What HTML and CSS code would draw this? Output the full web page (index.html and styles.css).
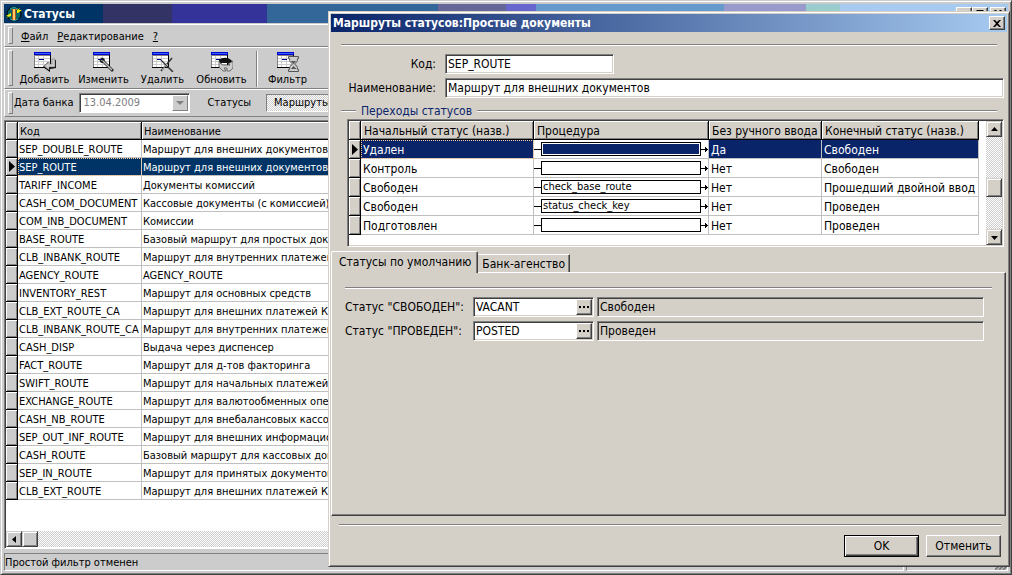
FILE: index.html
```html
<!DOCTYPE html>
<html lang="ru">
<head>
    <meta charset="UTF-8">
    <meta name="viewport" content="width=device-width, initial-scale=1.0">
    <title>Статусы</title>
    <link rel="stylesheet" href="styles.css">
</head>
<body>
    <svg class="defs" aria-hidden="true">
        <symbol id="sheet" viewBox="0 0 17 16">
            <path d="M0 0h17v16H0z" fill="#000"/>
            <path d="M0 0h16v15H0z" fill="#808080"/>
            <path d="M1 4h15v11H1z" fill="#fff"/>
            <path d="M0 0h17v3H0z" fill="#00c"/>
            <path d="M1 1h15v1H1z" fill="#36f"/>
            <path d="M1 6.5h15M1 9.5h15M1 12.5h15M4.5 4v11M9.5 4v11" stroke="#ccc" fill="none"/>
            <path d="M5 7h5v1H5z" fill="#008"/>
        </symbol>
    </svg>

    <div class="window">
        <div class="caption">
            <svg class="app-icon" viewBox="0 0 16 16">
                <circle cx="8" cy="8" r="7" fill="#066" stroke="#000"/>
                <path d="M4 3l4-2 4 2M4 13l4 2 4-2" stroke="#3aa" fill="none"/>
                <path d="M5 3h6v1H5zM6 4h4v10H6z" fill="#a52"/>
                <path d="M7 3h2v11H7z" fill="#fc6"/>
                <path d="M0 12l2-2H0l5-3v3l-3 1zM11 7V4l3-2-1 2h3l-4 3z" fill="#ee0"/>
            </svg>
            <h1>Статусы</h1>
            <div class="caption-buttons">
                <button class="cap-btn" aria-label="Свернуть"></button>
                <button class="cap-btn" aria-label="Развернуть"><svg viewBox="0 0 9 9"><path d="M0 0h9v9H0zM1 2v6h7V2z" fill-rule="evenodd"/></svg></button>
                <button class="cap-btn cap-close" aria-label="Закрыть"><svg viewBox="0 0 8 7"><path d="M0 0h2l2 2 2-2h2L5 3.5 8 7H6L4 5 2 7H0l3-3.5z"/></svg></button>
            </div>
        </div>

        <div class="bar menu-bar">
            <button class="menu"><u>Ф</u>айл</button>
            <button class="menu"><u>Р</u>едактирование</button>
            <button class="menu"><u>?</u></button>
        </div>

        <div class="bar tool-bar">
            <button class="tool">
                <svg viewBox="0 0 22 20">
                    <use href="#sheet" width="17" height="16"/>
                    <path d="M22 8v8l-6 1v3l-7-5 5-5v3h4V8z" fill="#000"/>
                    <path d="M21 7v8h-6v3l-5-4 5-4v2h3V7z" fill="#ccc" stroke="#777" stroke-width=".6"/>
                </svg>
                Добавить
            </button>
            <button class="tool">
                <svg viewBox="0 0 22 20">
                    <use href="#sheet" width="17" height="16"/>
                    <path d="M7 6c3-1 5 0 5 3l9 9-2 2-9-9c-3 0-4-2-3-4l2 2 1-1z" fill="#222"/>
                    <path d="M10 9l9 9" stroke="#bbb" stroke-width="1.5"/>
                </svg>
                Изменить
            </button>
            <button class="tool">
                <svg viewBox="0 0 22 20">
                    <use href="#sheet" width="17" height="16"/>
                    <path d="M9 8l12 12M20 6L9 19" stroke="#333" stroke-width="1.5"/>
                    <path d="M9 7l7 7M15 12l-5 6" stroke="#aaa"/>
                </svg>
                Удалить
            </button>
            <button class="tool">
                <svg viewBox="0 0 22 20">
                    <use href="#sheet" width="17" height="16"/>
                    <path d="M8 8c3-3 9-3 12 0l2 2-3 3-2-2H11l-3 2z" fill="#111"/>
                    <path d="M8 9v6l4 4h3l-2-3h3v3h3l3-3V9l-5 3 2 1h-7l-2-1z" fill="#ccc" stroke="#444" stroke-width=".7"/>
                </svg>
                Обновить
            </button>
            <span class="separator"></span>
            <button class="tool">
                <svg viewBox="0 0 22 20">
                    <use href="#sheet" width="17" height="16"/>
                    <path d="M11.5 4.500h10v2h-1c0 3-1 4-3 5.500 2 1.500 3 2.500 3 5.500h1v2h-10v-2h1c0-3 1-4 3-5.500-2-1.500-3-2.500-3-5.500h-1z" fill="#ccc" stroke="#555"/>
                    <path d="M14 9h5l-2.500 3zM14 17l2.500-3 3 3z" fill="#555"/>
                </svg>
                Фильтр
            </button>
        </div>

        <div class="bar filter-bar">
            <label for="bankDate">Дата банка</label>
            <div class="date-box">
                <select id="bankDate" disabled>
                    <option>13.04.2009</option>
                </select>
                <span class="drop"><svg viewBox="0 0 8 4"><path d="M0 0h8L4 4z" fill="#808080"/></svg></span>
            </div>
            <span class="filter-title">Статусы</span>
            <button class="pressed">Маршруты</button>
        </div>

        <div class="grid-box">
            <table class="grid routes">
                <thead>
                    <tr><th class="mark"></th><th class="code">Код</th><th>Наименование</th></tr>
                </thead>
                <tbody>
                    <tr><td class="mark"></td><td>SEP_DOUBLE_ROUTE</td><td>Маршрут для внешних документов (</td></tr>
                    <tr class="selected"><td class="mark"><svg class="pointer" viewBox="0 0 6 11"><path d="M0 0l6 5.5L0 11z"/></svg></td><td class="focus">SEP_ROUTE</td><td>Маршрут для внешних документов</td></tr>
                    <tr><td class="mark"></td><td>TARIFF_INCOME</td><td>Документы комиссий</td></tr>
                    <tr><td class="mark"></td><td>CASH_COM_DOCUMENT</td><td>Кассовые документы (с комиссией)</td></tr>
                    <tr><td class="mark"></td><td>COM_INB_DOCUMENT</td><td>Комиссии</td></tr>
                    <tr><td class="mark"></td><td>BASE_ROUTE</td><td>Базовый маршрут для простых доку</td></tr>
                    <tr><td class="mark"></td><td>CLB_INBANK_ROUTE</td><td>Маршрут для внутренних платежей</td></tr>
                    <tr><td class="mark"></td><td>AGENCY_ROUTE</td><td>AGENCY_ROUTE</td></tr>
                    <tr><td class="mark"></td><td>INVENTORY_REST</td><td>Маршрут для основных средств</td></tr>
                    <tr><td class="mark"></td><td>CLB_EXT_ROUTE_CA</td><td>Маршрут для внешних платежей КБ</td></tr>
                    <tr><td class="mark"></td><td>CLB_INBANK_ROUTE_CA</td><td>Маршрут для внутренних платежей</td></tr>
                    <tr><td class="mark"></td><td>CASH_DISP</td><td>Выдача через диспенсер</td></tr>
                    <tr><td class="mark"></td><td>FACT_ROUTE</td><td>Маршрут для д-тов факторинга</td></tr>
                    <tr><td class="mark"></td><td>SWIFT_ROUTE</td><td>Маршрут для начальных платежей S</td></tr>
                    <tr><td class="mark"></td><td>EXCHANGE_ROUTE</td><td>Маршрут для валютообменных опер</td></tr>
                    <tr><td class="mark"></td><td>CASH_NB_ROUTE</td><td>Маршрут для внебалансовых кассов</td></tr>
                    <tr><td class="mark"></td><td>SEP_OUT_INF_ROUTE</td><td>Маршрут для внешних информацион</td></tr>
                    <tr><td class="mark"></td><td>CASH_ROUTE</td><td>Базовый маршрут для кассовых док</td></tr>
                    <tr><td class="mark"></td><td>SEP_IN_ROUTE</td><td>Маршрут для принятых документов</td></tr>
                    <tr><td class="mark"></td><td>CLB_EXT_ROUTE</td><td>Маршрут для внешних платежей КБ</td></tr>
                </tbody>
            </table>
            <div class="scroll-x">
                <button class="scroll-btn" aria-label="Влево"><svg viewBox="0 0 7 7"><path d="M5 0v7L1 3.5z"/></svg></button>
                <span class="thumb"></span>
            </div>
        </div>

        <div class="status-bar">
            <span class="status-text">Простой фильтр отменен</span>
            <span class="status-end"><svg viewBox="0 0 12 12"><path d="M0 12L12 0M4 12l8-8M8 12l4-4" stroke="#808080" stroke-width="2"/></svg></span>
        </div>
    </div>

    <div class="dialog" role="dialog" aria-labelledby="dialogTitle">
        <div class="dialog-caption">
            <h2 id="dialogTitle">Маршруты статусов:Простые документы</h2>
            <button class="cap-btn" aria-label="Закрыть"><svg viewBox="0 0 8 7"><path d="M0 0h2l2 2 2-2h2L5 3.5 8 7H6L4 5 2 7H0l3-3.5z"/></svg></button>
        </div>

        <form class="route-form">
            <hr>
            <div class="form-row">
                <label for="code">Код:</label>
                <input class="sunken short" type="text" id="code" value="SEP_ROUTE">
            </div>
            <div class="form-row">
                <label for="name">Наименование:</label>
                <input class="sunken" type="text" id="name" value="Маршрут для внешних документов">
            </div>
        </form>

        <div class="group-title"><span>Переходы статусов</span></div>

        <div class="steps-box">
            <div class="steps-view">
                <table class="grid steps">
                    <thead>
                        <tr><th class="mark"></th><th class="from">Начальный статус (назв.)</th><th class="proc">Процедура</th><th class="manual">Без ручного ввода</th><th class="to">Конечный статус (назв.)</th></tr>
                    </thead>
                    <tbody>
                        <tr class="selected"><td class="mark"><svg class="pointer" viewBox="0 0 6 11"><path d="M0 0l6 5.5L0 11z"/></svg></td><td class="focus">Удален</td><td class="flow"><div class="link"><span class="node"></span></div></td><td>Да</td><td>Свободен</td></tr>
                        <tr><td class="mark"></td><td>Контроль</td><td class="flow"><div class="link"><span class="node"></span></div></td><td>Нет</td><td>Свободен</td></tr>
                        <tr><td class="mark"></td><td>Свободен</td><td class="flow"><div class="link"><span class="node">check_base_route</span></div></td><td>Нет</td><td>Прошедший двойной ввод</td></tr>
                        <tr><td class="mark"></td><td>Свободен</td><td class="flow"><div class="link"><span class="node">status_check_key</span></div></td><td>Нет</td><td>Проведен</td></tr>
                        <tr><td class="mark"></td><td>Подготовлен</td><td class="flow"><div class="link"><span class="node"></span></div></td><td>Нет</td><td>Проведен</td></tr>
                    </tbody>
                </table>
            </div>
            <div class="scroll-y">
                <button class="scroll-btn" aria-label="Вверх"><svg viewBox="0 0 7 7"><path d="M0 5h7L3.5 1z"/></svg></button>
                <span class="thumb"></span>
                <button class="scroll-btn" aria-label="Вниз"><svg viewBox="0 0 7 7"><path d="M0 2h7L3.5 6z"/></svg></button>
            </div>
        </div>

        <div class="tabs">
            <button class="tab active">Статусы по умолчанию</button>
            <button class="tab">Банк-агенство</button>
        </div>
        <div class="tab-page">
            <hr>
            <div class="status-row">
                <label for="vacant">Статус "СВОБОДЕН":</label>
                <div class="sunken picker">
                    <input type="text" id="vacant" value="VACANT">
                    <button aria-label="Выбрать"><svg viewBox="0 0 10 2"><path d="M0 0h2v2H0zM4 0h2v2H4zM8 0h2v2H8z"/></svg></button>
                </div>
                <input class="readonly" type="text" value="Свободен" aria-label="Свободен" readonly>
            </div>
            <div class="status-row">
                <label for="posted">Статус "ПРОВЕДЕН":</label>
                <div class="sunken picker">
                    <input type="text" id="posted" value="POSTED">
                    <button aria-label="Выбрать"><svg viewBox="0 0 10 2"><path d="M0 0h2v2H0zM4 0h2v2H4zM8 0h2v2H8z"/></svg></button>
                </div>
                <input class="readonly" type="text" value="Проведен" aria-label="Проведен" readonly>
            </div>
        </div>

        <div class="dialog-footer">
            <hr>
            <div class="actions">
                <button class="btn default">OK</button>
                <button class="btn">Отменить</button>
            </div>
        </div>
    </div>
</body>
</html>
```
FILE: styles.css
```css
* {
    box-sizing: border-box;
}
body {
    margin: 0;
    background: #ccc;
    color: #000;
    font: 11px/14px "DejaVu Sans Condensed", Tahoma, sans-serif;
}
button, input, select {
    margin: 0;
    padding: 0;
    border: 0;
    border-radius: 0;
    background: none;
    color: inherit;
    font: inherit;
}
svg {
    display: block;
}
h1, h2 {
    margin: 0;
    color: #fff;
    font-size: 12px;
    font-weight: bold;
    white-space: nowrap;
}
hr {
    margin: 0;
    border: 0;
    border-top: 1px solid #808080;
    border-bottom: 1px solid #fff;
}
.defs {
    position: absolute;
    width: 0;
    height: 0;
}

/* main window */
.window {
    display: flex;
    flex-direction: column;
    height: 100vh;
    padding: 2px 2px 3px;
    border: 1px solid #ccc;
    border-right-color: #404040;
    border-bottom-color: #404040;
    box-shadow: inset 1px 1px #fff, inset -1px -1px #808080;
    overflow: hidden;
}
.caption {
    display: flex;
    align-items: center;
    flex: none;
    height: 19px;
    margin: 1px 1px 0;
    padding: 0 2px;
    gap: 2px;
    background: linear-gradient(90deg, #036 99px, #336 99px 168px, #339 168px 263px, #369 263px 434px, #669 434px 502px, #66c 502px 532px, #69c 532px 720px, #99c 720px 802px, #9cc 802px 836px, #a6caf0 836px);
}
.app-icon {
    width: 16px;
    height: 16px;
}
.caption-buttons {
    display: flex;
    margin-left: auto;
}
.cap-btn {
    display: flex;
    align-items: center;
    justify-content: center;
    width: 16px;
    height: 14px;
    background: #d4d0c8;
    border: 1px solid #fff;
    border-right-color: #404040;
    border-bottom-color: #404040;
    box-shadow: inset -1px -1px #808080;
}
.cap-btn svg {
    width: 8px;
    height: 7px;
}
.cap-close {
    margin-left: 2px;
}

.bar {
    display: flex;
    flex: none;
    align-items: center;
    position: relative;
    margin: 0 1px;
    padding-left: 10px;
    border: 1px solid #fff;
    border-bottom-color: #808080;
    border-right: 0;
}
.bar::before {
    content: "";
    position: absolute;
    left: 3px;
    top: 2px;
    bottom: 2px;
    width: 3px;
    border: 1px solid #fff;
    border-right-color: #808080;
    border-bottom-color: #808080;
}
.menu-bar {
    height: 23px;
    margin-top: 1px;
    padding-top: 2px;
}
.menu {
    padding: 0 3px 0 6px;
}
.tool-bar {
    height: 42px;
}
.tool {
    display: flex;
    flex-direction: column;
    align-items: center;
    gap: 1px;
    width: 59px;
    padding-top: 2px;
}
.tool svg {
    width: 22px;
    height: 20px;
}
.separator {
    align-self: stretch;
    width: 2px;
    margin: 3px 0 1px 5px;
    border-left: 1px solid #808080;
    border-right: 1px solid #fff;
}
.filter-bar {
    height: 28px;
    padding-left: 9px;
}
.date-box {
    display: flex;
    width: 111px;
    height: 20px;
    margin-left: 6px;
    padding: 1px;
    background: #fff;
    border: 1px solid #808080;
    border-right-color: #fff;
    border-bottom-color: #fff;
    box-shadow: inset 1px 1px #404040;
}
.date-box select {
    flex: 1;
    padding-left: 2px;
    appearance: none;
    color: #808080;
    opacity: 1;
}
.drop {
    display: flex;
    align-items: center;
    justify-content: center;
    width: 16px;
    background: #ccc;
    border: 1px solid #fff;
    border-right-color: #808080;
    border-bottom-color: #808080;
}
.drop svg {
    width: 8px;
    height: 4px;
}
.filter-title {
    margin: 0 15px 0 17px;
}
.pressed {
    height: 18px;
    padding: 0 7px;
    border: 1px solid #808080;
    border-right-color: #fff;
    border-bottom-color: #fff;
    background: repeating-conic-gradient(#fff 0 25%, #ccc 0 50%) 0 0 / 2px 2px;
}

/* grids */
.grid-box {
    display: flex;
    flex: 1;
    flex-direction: column;
    min-height: 0;
    margin: 3px 1px 0;
    padding: 1px;
    background: #fff;
    border: 1px solid #808080;
    border-right-color: #fff;
    border-bottom-color: #fff;
    box-shadow: inset 1px 1px #404040;
}
.grid {
    table-layout: fixed;
    width: 100%;
    border-collapse: separate;
    border-spacing: 0;
}
.grid th, .grid td {
    height: 18px;
    padding: 2px 1px 0;
    overflow: hidden;
    white-space: nowrap;
    text-align: left;
    font-weight: normal;
}
.grid td {
    border-right: 1px solid #c0c0c0;
    border-bottom: 1px solid #c0c0c0;
}
.grid th, .grid .mark {
    background: #ccc;
    border-right: 1px solid #000;
    border-bottom: 1px solid #000;
    box-shadow: inset 1px 1px #fff, inset -1px -1px #808080;
}
.grid th {
    padding: 2px 2px 0;
}
.grid .mark {
    width: 12px;
    padding: 0 3px;
}
.grid .code {
    width: 124px;
}
.grid .selected td:not(.mark) {
    background: #036;
    color: #fff;
}
.grid .selected .focus {
    outline: 1px dotted #fc9;
    outline-offset: -1px;
}
.pointer {
    width: 6px;
    height: 11px;
}
.scroll-x, .scroll-y {
    display: flex;
    background: repeating-conic-gradient(#fff 0 25%, #ccc 0 50%) 0 0 / 2px 2px;
}
.scroll-x {
    height: 16px;
    margin-top: auto;
}
.scroll-btn, .thumb {
    display: flex;
    align-items: center;
    justify-content: center;
    width: 16px;
    height: 16px;
    background: #ccc;
    border: 1px solid #ccc;
    border-right-color: #404040;
    border-bottom-color: #404040;
    box-shadow: inset 1px 1px #fff, inset -1px -1px #808080;
}
.scroll-btn svg {
    width: 7px;
    height: 7px;
}

.status-bar {
    display: flex;
    flex: none;
    gap: 2px;
    height: 18px;
    margin: 4px 1px 0;
}
.status-text, .status-end {
    border: 1px solid #808080;
    border-right-color: #fff;
    border-bottom-color: #fff;
}
.status-text {
    flex: 1;
    padding-top: 2px;
}
.status-end {
    display: flex;
    align-items: flex-end;
    justify-content: flex-end;
    width: 102px;
}
.status-end svg {
    width: 12px;
    height: 12px;
}

/* route dialog, floats over the main window */
.dialog {
    position: absolute;
    left: 328px;
    top: 11px;
    right: 2px;
    bottom: 8px;
    display: flex;
    flex-direction: column;
    padding: 2px;
    background: #d4d0c8;
    border: 1px solid #d4d0c8;
    border-right-color: #404040;
    border-bottom-color: #404040;
    box-shadow: inset 1px 1px #fff, inset -1px -1px #808080;
    font-size: 12px;
}
.dialog-caption {
    display: flex;
    flex: none;
    align-items: center;
    justify-content: space-between;
    height: 18px;
    padding: 0 2px;
    background: linear-gradient(90deg, #0a246a, #a6caf0);
}
.route-form {
    display: flex;
    flex-direction: column;
    padding: 12px 3px 0 10px;
}
.route-form hr {
    margin: 0 7px 8px 0;
}
.form-row {
    display: flex;
    align-items: center;
    margin-bottom: 4px;
}
.form-row label {
    width: 95px;
    margin-right: 9px;
    text-align: right;
}
.sunken {
    flex: 1;
    height: 20px;
    padding: 0 2px;
    background: #fff;
    border: 1px solid #808080;
    border-right-color: #fff;
    border-bottom-color: #fff;
    box-shadow: inset 1px 1px #404040, inset -1px -1px #d4d0c8;
}
.short {
    flex: none;
    width: 169px;
}
.group-title {
    display: flex;
    align-items: center;
    height: 16px;
    margin: 1px 10px 0;
    gap: 5px;
    color: #0a246a;
}
.group-title::before, .group-title::after {
    content: "";
    width: 15px;
    border-top: 1px solid #808080;
    border-bottom: 1px solid #fff;
}
.group-title::after {
    flex: 1;
}
.steps-box {
    display: flex;
    height: 128px;
    margin: 0 3px 0 16px;
    padding: 1px;
    background: #fff;
    border: 1px solid #808080;
    border-right-color: #fff;
    border-bottom-color: #fff;
    box-shadow: inset 1px 1px #404040, inset -1px -1px #d4d0c8;
}
.steps-view {
    flex: 1;
    padding-right: 7px;
}
.steps th, .steps td {
    height: 19px;
}
.steps td {
    padding: 2px 2px 0;
}
.steps th {
    padding: 2px 3px 0;
}
.steps th, .steps .mark {
    background: #d4d0c8;
}
.steps .from {
    width: 173px;
}
.steps .proc {
    width: 175px;
}
.steps .manual {
    width: 113px;
}
.steps .selected td:not(.mark) {
    background: #0a246a;
}
.steps td.flow, .steps .selected td.flow:not(.mark) {
    padding: 0;
    background: #fff;
    color: #000;
}
.link {
    display: flex;
    align-items: center;
}
.link::before {
    content: "";
    width: 7px;
    height: 1px;
    background: #000;
}
.link::after {
    content: "";
    width: 7px;
    height: 5px;
    background: linear-gradient(#000, #000) 0 2px / 7px 1px no-repeat, linear-gradient(#000, #000) 5px 1px / 1px 3px no-repeat, linear-gradient(#000, #000) 4px 0 / 1px 5px no-repeat;
}
.node {
    flex: 1;
    height: 14px;
    padding-left: 1px;
    overflow: hidden;
    border: 1px solid #000;
    font-size: 11px;
    line-height: 12px;
}
.selected .node {
    background: #0a246a;
    box-shadow: inset 0 0 0 1px #fff;
}
.scroll-y {
    flex-direction: column;
    width: 16px;
}
.scroll-y .thumb {
    height: 19px;
    margin: 41px 0 auto;
}
.dialog .scroll-btn, .dialog .thumb {
    background: #d4d0c8;
    border-top-color: #d4d0c8;
    border-left-color: #d4d0c8;
}

.tabs {
    display: flex;
    align-items: flex-end;
    height: 22px;
    margin-top: 3px;
}
.tab {
    height: 18px;
    padding: 0 4px;
    border-top: 1px solid #fff;
    border-right: 1px solid #404040;
    box-shadow: inset -1px 0 #808080;
    white-space: nowrap;
}
.tab.active {
    position: relative;
    height: 22px;
    margin-bottom: -1px;
    padding: 0 6px 1px 7px;
    background: #d4d0c8;
    border-left: 1px solid #fff;
    border-radius: 2px 2px 0 0;
}
.tab-page {
    flex: 1;
    margin-right: 1px;
    padding: 14px 13px 0;
    border: 1px solid #fff;
    border-right-color: #404040;
    border-bottom-color: #404040;
    box-shadow: inset -1px -1px #808080;
}
.tab-page hr {
    margin-bottom: 8px;
}
.status-row {
    display: flex;
    align-items: center;
    margin: 0 8px 4px 0;
}
.status-row label {
    width: 128px;
    white-space: nowrap;
}
.picker {
    display: flex;
    flex: none;
    width: 121px;
    margin-right: 3px;
    padding: 1px 1px 1px 2px;
}
.picker input {
    flex: 1;
    min-width: 0;
}
.picker button {
    display: flex;
    align-items: center;
    justify-content: center;
    width: 16px;
    background: #d4d0c8;
    border: 1px solid #fff;
    border-right-color: #404040;
    border-bottom-color: #404040;
    box-shadow: inset -1px -1px #808080;
}
.picker svg {
    width: 10px;
    height: 2px;
}
.readonly {
    flex: 1;
    height: 20px;
    padding: 0 2px;
    border: 1px solid #808080;
    border-right-color: #fff;
    border-bottom-color: #fff;
    box-shadow: inset 1px 1px #404040;
}
.dialog-footer {
    padding: 8px 6px 7px 8px;
}
.actions {
    display: flex;
    justify-content: flex-end;
    gap: 7px;
    margin-top: 9px;
}
.btn {
    width: 75px;
    height: 22px;
    border: 1px solid #fff;
    border-right-color: #404040;
    border-bottom-color: #404040;
    box-shadow: inset -1px -1px #808080;
}
.btn.default {
    border-color: #000;
    box-shadow: inset 1px 1px #fff, inset -1px -1px #404040, inset -2px -2px #808080;
}
```
